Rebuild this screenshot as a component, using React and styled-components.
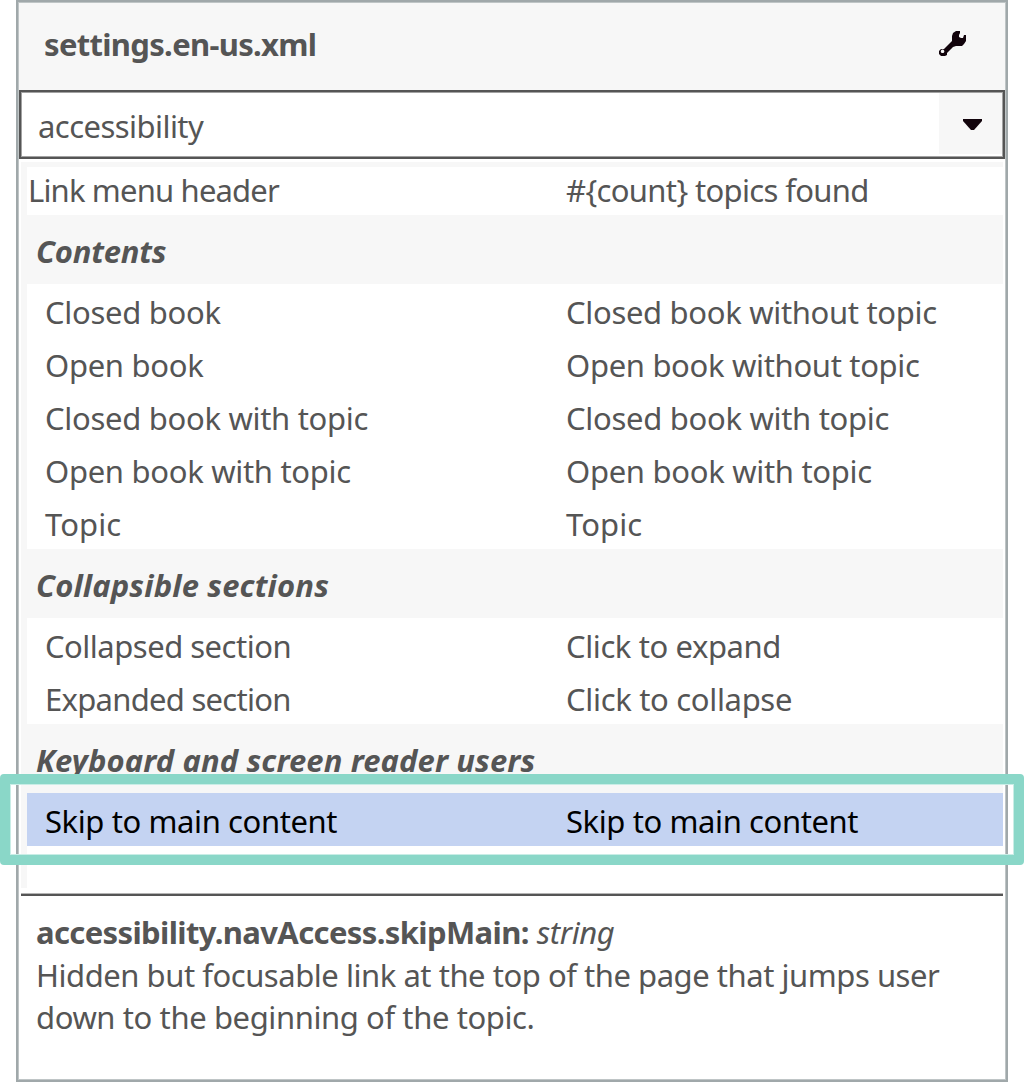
import React from 'react'
import styled, { createGlobalStyle, css } from 'styled-components'

const GlobalStyle = createGlobalStyle`
  * {
    box-sizing: border-box;
  }

  body {
    margin: 0;
    background: #fff;
    color: #555;
    font-family: 'Noto Sans', 'Open Sans', sans-serif;
    font-size: 31px;
    overflow: hidden;
  }
`

const Page = styled.main`
  height: 1082px;
  padding: 0 16px;
`

const Panel = styled.section`
  position: relative;
  display: flex;
  flex-direction: column;
  height: 100%;
  padding: 1px;
  border: 2px solid #a0a8aa;
  box-shadow: inset 0 0 0 1px #bfc5c6;
`

const Label = styled.span`
  white-space: pre;
  letter-spacing: ${(props) => props.$track || 0}px;
`

const Header = styled.header`
  display: flex;
  justify-content: space-between;
  align-items: center;
  height: 87px;
  padding: 0 39px 6px 25px;
  background: #f7f7f7;
`

const Title = styled(Label)`
  font-weight: 700;
`

const Wrench = styled.svg`
  width: 28px;
  height: 25px;
  fill: #12040c;
`

const Select = styled.div`
  display: flex;
  height: 69px;
  padding: 1px;
  border: 2px solid #555;
  background: #fff;
  box-shadow: inset 0 0 0 1px #a2a2a2;
`

const SelectValue = styled.div`
  flex: 1;
  padding-left: 16px;
  line-height: 66px;
`

const SelectButton = styled.button`
  display: flex;
  justify-content: center;
  align-items: center;
  width: 63px;
  height: 61px;
  padding: 2px 0 0 3px;
  border: 0;
  background: #f7f7f7;
`

const Arrow = styled.svg`
  width: 19px;
  height: 11px;
  fill: #12040c;
`

const List = styled.div`
  height: 726px;
  margin: 3px 2px 6px;
  padding: 5px 0 0 6px;
  background: #f7f7f7;
`

const Row = styled.div`
  display: grid;
  grid-template-columns: 521px 1fr;
  height: 53px;
  padding-left: 18px;
  line-height: 57px;
  background: #fff;

  ${(props) =>
    props.$top &&
    css`
      grid-template-columns: 538px 1fr;
      height: 48px;
      padding-left: 1px;
      line-height: 47px;
    `}

  ${(props) =>
    props.$selected &&
    css`
      color: #000;
      background: #c4d3f2;
    `}
`

const Group = styled.div`
  height: 69px;
  padding-left: 9px;
  font-weight: 700;
  font-style: italic;
  line-height: 73px;
`

const Blank = styled.div`
  height: 46px;
  background: #fff;
`

const Details = styled.footer`
  flex: 1;
  margin: 0 2px;
  padding: 15px 15px 0;
  border-top: 2px solid #555;
  line-height: 42.5px;
  box-shadow: 0 -1px #b4b4b4;
`

const Name = styled(Label)`
  font-weight: 700;
`

const Type = styled(Label)`
  font-style: italic;
`

const Highlight = styled.div`
  position: absolute;
  top: 772px;
  left: -18px;
  width: 1024px;
  height: 91px;
  border: 10px solid #8ad7c8;
  border-radius: 4px;
  box-shadow: inset 0 0 0 1px #c9ede6;
`

const groups = [
  {
    title: 'Contents',
    track: -0.2,
    rows: [
      { name: 'Closed book', value: 'Closed book without topic' },
      { name: 'Open book', value: 'Open book without topic' },
      { name: 'Closed book with topic', value: 'Closed book with topic' },
      { name: 'Open book with topic', value: 'Open book with topic' },
      { name: 'Topic', value: 'Topic', track: 0.1 },
    ],
  },
  {
    title: 'Collapsible sections',
    track: 0.15,
    rows: [
      { name: 'Collapsed section', value: 'Click to expand', track: -0.5, valueTrack: -0.4 },
      { name: 'Expanded section', value: 'Click to collapse', track: -0.72 },
    ],
  },
  {
    title: 'Keyboard and screen reader users',
    track: 0.1,
    rows: [
      {
        name: 'Skip to main content',
        value: 'Skip to main content',
        track: -0.4,
        valueTrack: -0.4,
        selected: true,
      },
    ],
  },
]

export default function App() {
  return (
    <Page>
      <GlobalStyle />
      <Panel>
        <Header>
          <Title $track={-0.68}>settings.en-us.xml</Title>
          <Wrench viewBox="0 0 28 25">
            <path
              fillRule="evenodd"
              d="M14 5 15 2l3-2h4v2l-1 2v2l2 1h2l1-3h2v6l-2 3-2 2h-6l-3 1-6 6v2l-2 1H3l-2-2v-3l2-2h3l8-8zM4.500 18.500a1.800 1.800 0 1 0 .1 0z"
            />
          </Wrench>
        </Header>
        <Select>
          <SelectValue>
            <Label $track={-0.55}>accessibility</Label>
          </SelectValue>
          <SelectButton aria-label="Open">
            <Arrow viewBox="0 0 19 11">
              <path d="M0 0h19v2l-8 9H8L0 2z" />
            </Arrow>
          </SelectButton>
        </Select>
        <List>
          <Row $top>
            <Label $track={-0.83}>Link menu header</Label>
            <Label $track={-0.65}>{'#{count} topics found'}</Label>
          </Row>
          {groups.map((group) => (
            <React.Fragment key={group.title}>
              <Group>
                <Label $track={group.track}>{group.title}</Label>
              </Group>
              {group.rows.map(({ name, value, track = -0.3, valueTrack = -0.32, selected }) => (
                <Row key={name} $selected={selected}>
                  <Label $track={track}>{name}</Label>
                  <Label $track={name === value ? track : valueTrack}>{value}</Label>
                </Row>
              ))}
            </React.Fragment>
          ))}
          <Blank />
        </List>
        <Details>
          <div>
            <Name $track={-0.62}>accessibility.navAccess.skipMain:</Name>{' '}
            <Type $track={-0.4}>string</Type>
          </div>
          <div>
            <Label $track={-0.46}>Hidden but focusable link at the top of the page that jumps user</Label>
          </div>
          <div>
            <Label $track={-0.4}>down to the beginning of the topic.</Label>
          </div>
        </Details>
        <Highlight />
      </Panel>
    </Page>
  )
}
